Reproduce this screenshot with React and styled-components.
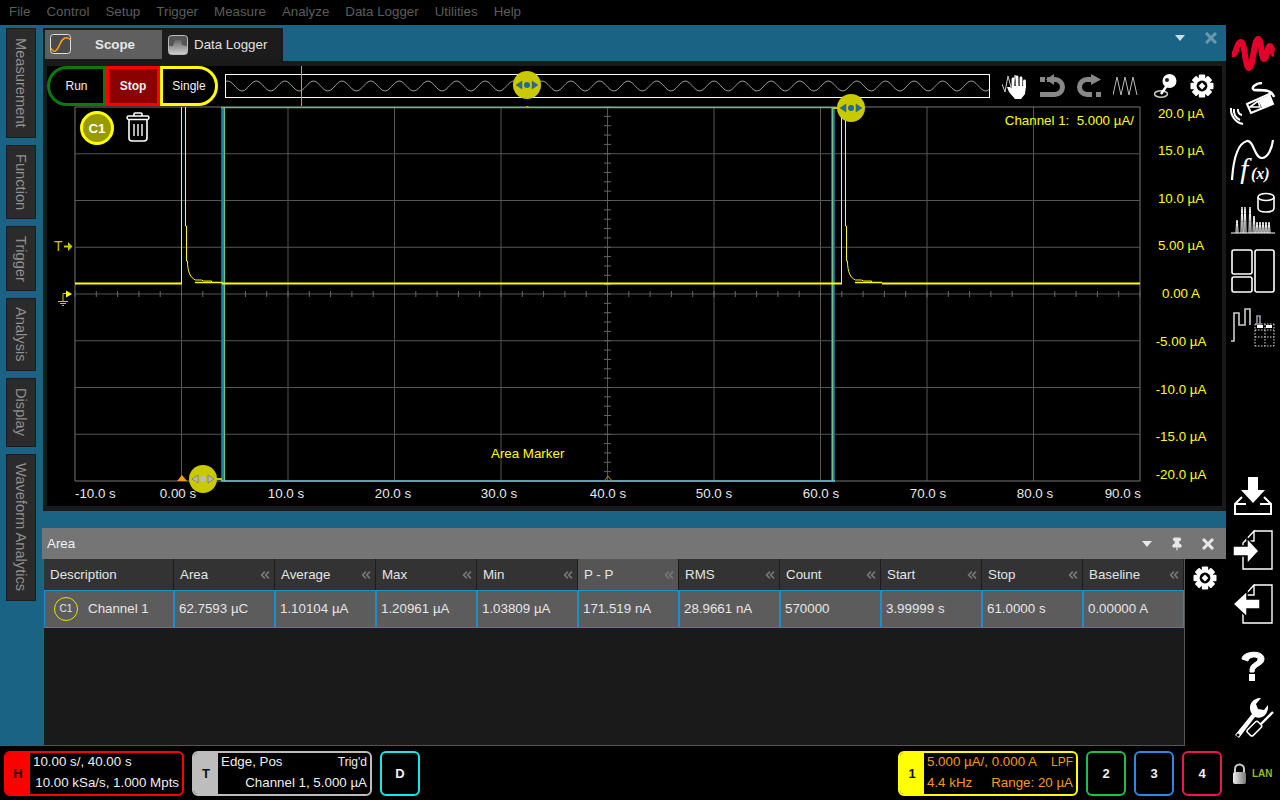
import React from "react";
import styled, { createGlobalStyle } from "styled-components";
import { ChevronsLeft, Pin } from "lucide-react";

const GlobalStyle = createGlobalStyle`
  html, body {
    margin: 0;
    padding: 0;
    background: #000;
  }
  body {
    font-family: "Liberation Sans", Arial, sans-serif;
  }
  * {
    box-sizing: border-box;
  }
`;

const Page = styled.div`
  width: 1280px;
  height: 800px;
  display: flex;
  flex-direction: column;
  overflow: hidden;
  background: #000;
`;

const MenuBar = styled.div`
  height: 25px;
  display: flex;
  align-items: center;
  gap: 16px;
  padding: 0 0 2px 9px;
  font-size: 13.33px;
  color: #5c5c5c;
`;

const Middle = styled.div`
  height: 721px;
  display: flex;
`;

const Work = styled.div`
  width: 1226px;
  display: flex;
  background: #1a6384;
`;

const SideTabs = styled.div`
  width: 43px;
  display: flex;
  flex-direction: column;
  gap: 7px;
  padding: 3px 0 0 6px;
`;

const SideTab = styled.div`
  width: 30px;
  height: ${(p) => p.$h}px;
  background: #2b2b2b;
  border: 1px solid #1c1c1c;
  color: #909090;
  font-size: 14.67px;
  writing-mode: vertical-rl;
  display: flex;
  justify-content: center;
  white-space: nowrap;
  line-height: 28px;
`;

const Panels = styled.div`
  width: 1183px;
  display: flex;
  flex-direction: column;
`;

const TabStrip = styled.div`
  height: 36px;
  padding-top: 3px;
  display: flex;
  align-items: flex-start;
  justify-content: space-between;
`;

const TabGroup = styled.div`
  width: 240px;
  height: 33px;
  padding: 2px;
  display: flex;
  background: #1a1a1a;
`;

const ViewTab = styled.div`
  flex: ${(p) => (p.$active ? "0 0 117px" : "1")};
  display: flex;
  align-items: center;
  gap: ${(p) => (p.$active ? "23px" : "6px")};
  padding-left: ${(p) => (p.$active ? "5px" : "6px")};
  background: ${(p) => (p.$active ? "#5f5f5f" : "#1c1c1c")};
  color: ${(p) => (p.$active ? "#e6e6e6" : "#e0e0e0")};
  font-size: 13.33px;
  font-weight: ${(p) => (p.$active ? 700 : 400)};
`;

const WindowButtons = styled.div`
  display: flex;
  align-items: center;
  gap: 20px;
  padding: 4px 9px 0 0;
`;

const ScopePanel = styled.div`
  height: 450px;
  padding: 5px 4px;
  background: #1a1a1a;
`;

const ScopeInner = styled.div`
  position: relative;
  height: 440px;
  background: #000;
`;

const Toolbar = styled.div`
  height: 40px;
  display: flex;
  align-items: center;
`;

const RunButton = styled.div`
  flex: 0 0 ${(p) => p.$w}px;
  height: 40px;
  display: flex;
  align-items: center;
  justify-content: center;
  border: 3px solid ${(p) => p.$color};
  border-radius: ${(p) => p.$radius};
  background: ${(p) => p.$bg || "#000"};
  color: #f0f0f0;
  font-size: 12px;
  font-weight: ${(p) => (p.$bold ? 700 : 400)};
`;

const Overview = styled.div`
  flex: 0 0 765px;
  height: 24px;
  margin-left: 7px;
  border: 1px solid #fff;
  overflow: hidden;
`;

const ToolIcons = styled.div`
  display: flex;
  align-items: center;
  margin-left: 6.5px;
`;

const ToolSlot = styled.div`
  flex: 0 0 ${(p) => p.$w}px;
  display: flex;
  justify-content: center;
`;

const Playhead = styled.div`
  position: absolute;
  left: 254px;
  top: 0;
  width: 1px;
  height: 40px;
  background: #d9963a;
`;

const PlotSvg = styled.svg`
  display: block;
  width: 1175px;
  height: 400px;
  font-family: "Liberation Sans", Arial, sans-serif;
  font-size: 13.33px;
`;

const ChannelBadge = styled.div`
  position: absolute;
  left: 33px;
  top: 45px;
  width: 34px;
  height: 34px;
  border-radius: 50%;
  border: 3px solid #ffff00;
  background: #999900;
  color: #fff;
  font-size: 13.33px;
  font-weight: 700;
  display: flex;
  align-items: center;
  justify-content: center;
`;

const TrashSlot = styled.div`
  position: absolute;
  left: 79px;
  top: 46px;
`;

const HandleBody = styled.div`
  position: absolute;
  left: ${(p) => p.$x - 14}px;
  top: ${(p) => p.$y - 14}px;
  width: 28px;
  height: 28px;
  border-radius: 50%;
  background: #c9c900;
  display: flex;
  align-items: center;
  justify-content: center;
`;

const AreaPanel = styled.div`
  margin-top: 17px;
  height: 218px;
  display: flex;
  flex-direction: column;
  background: #000;
`;

const TitleBar = styled.div`
  height: 31px;
  margin-left: -1px;
  padding: 0 12px 0 5px;
  display: flex;
  align-items: center;
  justify-content: space-between;
  background: #757575;
  color: #f2f2f2;
  font-size: 13.33px;
`;

const TitleButtons = styled.div`
  display: flex;
  align-items: center;
  gap: 18px;
`;

const AreaBody = styled.div`
  flex: 1;
  display: flex;
`;

const TableWrap = styled.div`
  width: 1142px;
  display: flex;
  flex-direction: column;
  background: #1a1a1a;
  border-right: 1px solid #555;
  border-bottom: 1px solid #555;
  border-left: 1px solid #555;
`;

const TableRow = styled.div`
  display: grid;
  grid-template-columns: 130px repeat(10, 1fr);
`;

const HeadCell = styled.div`
  height: 31px;
  display: flex;
  align-items: center;
  justify-content: space-between;
  padding: 0 2px 0 6px;
  background: ${(p) => (p.$active ? "#555" : "#333")};
  border-right: 1px solid #1c1c1c;
  color: #e4e4e4;
  font-size: 13.33px;
`;

const DataCell = styled.div`
  height: 38px;
  display: flex;
  align-items: center;
  gap: 10px;
  padding: 0 0 1px ${(p) => (p.$first ? 9 : 4)}px;
  background: #5c5c5c;
  border: 1px solid #1b8fc9;
  color: #e6e6e6;
  font-size: 13.33px;
`;

const MiniBadge = styled.div`
  width: 24px;
  height: 24px;
  border-radius: 50%;
  border: 1.5px solid #e6e600;
  color: #e8e8e8;
  font-size: 10px;
  display: flex;
  align-items: center;
  justify-content: center;
`;

const GearColumn = styled.div`
  flex: 1;
  display: flex;
  justify-content: center;
  padding: 7px 1px 0 0;
`;

const Sidebar = styled.div`
  flex: 1;
  display: flex;
  flex-direction: column;
  align-items: center;
`;

const SideIcon = styled.div`
  margin-top: ${(p) => p.$mt}px;
  line-height: 0;
`;

const StatusBar = styled.div`
  height: 54px;
  display: flex;
  align-items: flex-start;
  padding: 5px 0 0 4px;
`;

const InfoBox = styled.div`
  flex: 0 0 180px;
  height: 45px;
  margin-right: ${(p) => p.$mr || 0}px;
  display: flex;
  border: 2px solid ${(p) => p.$color};
  border-radius: 6px;
  overflow: hidden;
  background: #000;
`;

const InfoKey = styled.div`
  flex: 0 0 24px;
  display: flex;
  align-items: center;
  justify-content: center;
  background: ${(p) => p.$color};
  color: #111;
  font-size: 13px;
  font-weight: 700;
`;

const InfoText = styled.div`
  flex: 1;
  display: flex;
  flex-direction: column;
  justify-content: space-between;
  padding: 0 3px 2px 3px;
  color: ${(p) => p.$color || "#eee"};
  font-size: 13.33px;
  line-height: 18px;
`;

const InfoLine = styled.div`
  display: flex;
  justify-content: ${(p) => p.$justify || "space-between"};
  white-space: nowrap;
`;

const SmallNote = styled.span`
  font-size: 12px;
`;

const ChannelButton = styled.div`
  flex: 0 0 40px;
  height: 45px;
  margin-right: ${(p) => p.$mr || 0}px;
  display: flex;
  align-items: center;
  justify-content: center;
  border: 2px solid ${(p) => p.$color};
  border-radius: 6px;
  color: #f2f2f2;
  font-size: 13px;
  font-weight: 700;
`;

const Spacer = styled.div`
  flex: 1;
`;

const LockBox = styled.div`
  flex: 0 0 58px;
  height: 45px;
  display: flex;
  align-items: center;
  padding-left: 10px;
  gap: 5px;
  color: #8dbb2c;
  font-size: 10px;
  font-weight: 700;
`;

const menuItems = ["File", "Control", "Setup", "Trigger", "Measure", "Analyze", "Data Logger", "Utilities", "Help"];

const sideTabs = [
  ["Measurement", 110],
  ["Function", 74],
  ["Trigger", 65],
  ["Analysis", 73],
  ["Display", 69],
  ["Waveform Analytics", 147],
];

const columns = ["Description", "Area", "Average", "Max", "Min", "P - P", "RMS", "Count", "Start", "Stop", "Baseline"];
const values = ["62.7593 µC", "1.10104 µA", "1.20961 µA", "1.03809 µA", "171.519 nA", "28.9661 nA", "570000", "3.99999 s", "61.0000 s", "0.00000 A"];

const xLabels = [
  ["-10.0 s", 75, "start"],
  ["0.00 s", 178, "middle"],
  ["10.0 s", 286, "middle"],
  ["20.0 s", 393, "middle"],
  ["30.0 s", 499, "middle"],
  ["40.0 s", 608, "middle"],
  ["50.0 s", 714, "middle"],
  ["60.0 s", 821, "middle"],
  ["70.0 s", 928, "middle"],
  ["80.0 s", 1035, "middle"],
  ["90.0 s", 1141, "end"],
];

const yLabels = [
  ["20.0 µA", 118],
  ["15.0 µA", 155],
  ["10.0 µA", 203],
  ["5.00 µA", 250],
  ["0.00 A", 298],
  ["-5.00 µA", 346],
  ["-10.0 µA", 394],
  ["-15.0 µA", 441],
  ["-20.0 µA", 479],
];

// one spike of the trace, x is where the signal jumps up
const spikePath = (x) =>
  `M${x} 283 V107 M${x + 4} 107 V226 H${x + 5} V261 H${x + 6} C${x + 6} 272 ${x + 9} 278 ${x + 14} 280 H${x + 20} L${x + 22} 281 H${x + 30} V282.5 H${x + 40}`;

const sineWave = () => {
  const pts = [];
  for (let x = 0; x <= 765; x += 2) {
    pts.push(`${x},${11 + 5 * Math.sin((x / 28.6) * 2 * Math.PI - 1.945)}`);
  }
  return pts.join(" ");
};

const GearIcon = ({ size = 24 }) => (
  <svg width={size} height={size} viewBox="0 0 24 24">
    {[0, 45, 90, 135].map((r) => (
      <rect key={r} x="8.8" y="0.5" width="6.4" height="23" rx="1" fill="#fff" transform={`rotate(${r} 12 12)`} />
    ))}
    <circle cx="12" cy="12" r="8.5" fill="#fff" />
    <circle cx="12" cy="12" r="5.4" fill="#000" />
    <path d="M12 8.6 L15.4 12 L12 15.4 L8.6 12 Z" fill="#fff" />
  </svg>
);

const HandleArrows = ({ color }) => (
  <svg width="24" height="12" viewBox="0 0 24 12">
    <path d="M1 6 L7 2 V10 Z" fill={color} stroke="#556" strokeWidth="0.5" />
    <circle cx="12" cy="6" r="3" fill={color} />
    <path d="M23 6 L17 2 V10 Z" fill={color} stroke="#556" strokeWidth="0.5" />
  </svg>
);

const ScopeTabIcon = () => (
  <svg width="22" height="21" viewBox="0 0 22 21">
    <rect x="0.5" y="0.5" width="20" height="19" rx="3" fill="#4a4a4a" stroke="#ddd" />
    <path d="M1 14 C4 20 7 17 10 10 C12 5 16 1 21 6" fill="none" stroke="#f2a31b" strokeWidth="1.6" />
  </svg>
);

const LoggerTabIcon = () => (
  <svg width="20" height="20" viewBox="0 0 20 20">
    <defs>
      <linearGradient id="loggerFill" x1="0" x2="0" y1="0" y2="1">
        <stop offset="0" stopColor="#666" />
        <stop offset="1" stopColor="#ccc" />
      </linearGradient>
    </defs>
    <rect x="0.5" y="0.5" width="19" height="19" rx="3" fill="#555" stroke="#bbb" />
    <path d="M1 19 V11 L5 11 L7 5 H13 L14 10 L19 11 V19 Z" fill="url(#loggerFill)" />
  </svg>
);

const HandIcon = () => (
  <svg width="26" height="26" viewBox="0 0 26 26">
    <path d="M0 11 L3 19 L6 3 L10 18 L13 2 L17 16" fill="none" stroke="#ccc" strokeWidth="1" />
    <path d="M11 13 V6 M15 12 V4 M19 12 V5 M22.5 14 V8" stroke="#fff" strokeWidth="2.8" strokeLinecap="round" />
    <path d="M9.5 13 H24 L23 21 L19 26 H13 L7 19 L5 14 L8 14 L10 16 Z" fill="#fff" />
  </svg>
);

const UndoIcon = () => (
  <svg width="25" height="24" viewBox="0 0 25 24">
    <rect x="0" y="3" width="5" height="5" fill="#888" />
    <path d="M7 5.5 H15 A7.5 7.5 0 0 1 15 20.5 H0" fill="none" stroke="#888" strokeWidth="5" />
    <path d="M14 0 L6 5.5 L14 11 Z" fill="#888" />
  </svg>
);

const RedoIcon = () => (
  <svg width="25" height="24" viewBox="0 0 25 24">
    <rect x="19" y="18" width="5" height="5" fill="#888" />
    <path d="M18 5.5 H10 A7.5 7.5 0 0 0 10 20.5 H15" fill="none" stroke="#888" strokeWidth="5" />
    <path d="M14 0 L24 5.5 L14 11 Z" fill="#888" />
  </svg>
);

const ZigzagIcon = () => (
  <svg width="25" height="20" viewBox="0 0 25 20">
    <path d="M0 19 L4 1 L8 19 L12 1 L16 19 L20 1 L24 19" fill="none" stroke="#bbb" strokeWidth="1" />
  </svg>
);

const JoystickIcon = () => (
  <svg width="24" height="25" viewBox="0 0 24 25">
    <ellipse cx="7" cy="20" rx="6.5" ry="3.2" fill="none" stroke="#ccc" strokeWidth="1.5" />
    <path d="M7 20 L14 10" stroke="#fff" strokeWidth="2.5" />
    <circle cx="15.5" cy="7" r="7" fill="#fff" />
    <circle cx="13" cy="6" r="2" fill="#222" />
  </svg>
);

const TrashIcon = () => (
  <svg width="24" height="30" viewBox="0 0 24 30">
    <path d="M8 4 V2 Q8 1 9 1 H15 Q16 1 16 2 V4" fill="none" stroke="#fff" strokeWidth="1.6" />
    <rect x="1" y="4" width="22" height="3.4" rx="1.7" fill="none" stroke="#fff" strokeWidth="1.5" />
    <path d="M3 8 V26 Q3 29 6 29 H18 Q21 29 21 26 V8" fill="none" stroke="#fff" strokeWidth="1.6" />
    <path d="M8 12 V24 M12 12 V24 M16 12 V24" stroke="#ddd" strokeWidth="1.6" />
  </svg>
);

const LogoIcon = () => (
  <svg width="44" height="36" viewBox="0 0 44 36">
    <path
      d="M1 18 H3 C5 18 6 6 10 6 C14 6 14 32 18 32 C22 32 23 3 27 3 C31 3 30 23 33 23 C36 23 36 10 39 10 C41 10 41 18 43 18"
      fill="none"
      stroke="#e4002b"
      strokeWidth="6"
      strokeLinejoin="round"
    />
  </svg>
);

const ProbeIcon = () => (
  <svg width="54" height="48" viewBox="0 0 54 48">
    <path d="M44 13 C46 7 34 8 28 8 C24 6 30 1 36 1 M28 8 C34 9 46 6 48 15" fill="none" stroke="#fff" strokeWidth="2.4" />
    <path d="M21 22 L43 12 L47 22 L25 31 Z" fill="#000" stroke="#fff" strokeWidth="2" />
    <path d="M32 18 L43 13 L47 22 L36 26 Z" fill="#fff" />
    <path d="M24 25 L32 19 L34 25 Z" fill="none" stroke="#fff" strokeWidth="1.6" />
    <path d="M16 33 A5 5 0 0 1 12 27 M14 38 A10 10 0 0 1 8 27 M17 42 A15 15 0 0 1 5 26" fill="none" stroke="#fff" strokeWidth="2" />
  </svg>
);

const FxIcon = () => (
  <svg width="44" height="46" viewBox="0 0 44 46">
    <path d="M1 42 C2 26 5 6 16 3 C23 2 23 20 31 20 C37 20 41 10 42 2" fill="none" stroke="#fff" strokeWidth="2.2" />
    <text x="9" y="41" fontFamily="Liberation Serif, serif" fontSize="30" fontStyle="italic" fill="#fff">f</text>
    <text x="20" y="41" fontFamily="Liberation Serif, serif" fontSize="16" fontStyle="italic" fontWeight="700" fill="#fff">(x)</text>
  </svg>
);

const histogramBars = [
  [6, 28], [11, 15], [14, 15], [19, 15], [23, 24], [26, 30], [29, 30], [32, 30], [35, 30], [38, 30],
];

const HistogramIcon = () => (
  <svg width="44" height="42" viewBox="0 0 44 42">
    <ellipse cx="35" cy="5" rx="8" ry="3.5" fill="none" stroke="#fff" strokeWidth="1.6" />
    <path d="M27 5 V16 Q27 20 35 20 Q43 20 43 16 V5" fill="none" stroke="#fff" strokeWidth="1.6" />
    <path d="M0 41 H44" stroke="#fff" strokeWidth="1.2" />
    {histogramBars.map(([x, top]) => (
      <path key={x} d={`M${x - 1} 41 Q${x - 0.5} ${top} ${x} ${top} Q${x + 0.5} ${top} ${x + 1} 41`} fill="none" stroke="#fff" strokeWidth="1" />
    ))}
  </svg>
);

const LayoutIcon = () => (
  <svg width="44" height="44" viewBox="0 0 44 44">
    <rect x="1" y="1" width="20" height="24" rx="2" fill="none" stroke="#fff" strokeWidth="1.6" />
    <rect x="1" y="28" width="20" height="15" rx="2" fill="none" stroke="#fff" strokeWidth="1.6" />
    <rect x="24" y="1" width="19" height="42" rx="2" fill="none" stroke="#fff" strokeWidth="1.6" />
  </svg>
);

const BitsIcon = () => (
  <svg width="44" height="42" viewBox="0 0 44 42">
    <path d="M0 33 H3 V5 H8 V17 H14 V1 H19 V17" fill="none" stroke="#ccc" strokeWidth="1.6" />
    <path d="M26 17 V8 H29 V17" fill="none" stroke="#99a" strokeWidth="1.6" />
    <path d="M24 16 V38 M34 16 V38 M43 16 V38 M24 16 H43 M24 22 H43 M24 29 H43 M24 38 H43" fill="none" stroke="#ddd" strokeWidth="1" strokeDasharray="1.5 1.5" />
    <rect x="26" y="17" width="6" height="3" fill="#fff" />
    <rect x="35" y="17" width="6" height="3" fill="#fff" />
  </svg>
);

const DownloadIcon = () => (
  <svg width="38" height="38" viewBox="0 0 38 38">
    <path d="M14 0 H24 V13 H31 L19 26 L7 13 H14 Z" fill="#fff" />
    <path d="M8 20 L1 27 V37 H37 V27 L30 20" fill="none" stroke="#fff" strokeWidth="2" />
    <path d="M1 27 H12 M26 27 H37" stroke="#fff" strokeWidth="2" />
  </svg>
);

const ImportIcon = ({ out }) => (
  <svg width="40" height="40" viewBox="0 0 40 40">
    <path d="M21 1 H39 V39 H10 V13 L21 1 V11 H12" fill="none" stroke="#fff" strokeWidth="1.4" />
    {out ? (
      <path d="M27 16 H14 V8 L0 21 L14 34 V26 H27 Z" fill="#fff" stroke="#000" strokeWidth="1.5" transform="translate(0 -1)" />
    ) : (
      <path d="M0 16 H14 V8 L26 21 L14 34 V26 H0 Z" fill="#fff" stroke="#000" strokeWidth="1.5" />
    )}
  </svg>
);

const WrenchIcon = () => (
  <svg width="42" height="42" viewBox="0 0 42 42">
    <path d="M3 38 L20 17 C15 9 20 1 29 1 L24 7 L26 12 L32 13 L36 8 C37 17 30 23 23 20 L7 41 Z" fill="#fff" />
    <circle cx="6" cy="38" r="1.5" fill="#000" />
    <path d="M28 28 L41 15" stroke="#fff" strokeWidth="2.4" />
    <rect x="15" y="28" width="15" height="8" rx="2" fill="#000" stroke="#fff" strokeWidth="1.5" transform="rotate(-45 22 32)" />
  </svg>
);

const LockIcon = () => (
  <svg width="15" height="22" viewBox="0 0 15 22">
    <defs>
      <linearGradient id="lockBody" x1="0" x2="1">
        <stop offset="0" stopColor="#eee" />
        <stop offset="1" stopColor="#777" />
      </linearGradient>
    </defs>
    <path d="M3 10 V6 A4.5 4.5 0 0 1 12 6 V10" fill="none" stroke="#ccc" strokeWidth="2" />
    <rect x="1" y="9" width="13" height="12" rx="2" fill="url(#lockBody)" />
  </svg>
);

const Plot = () => {
  const vGrid = [];
  for (let i = 0; i <= 10; i++) vGrid.push(75 + i * 106.5);
  const hGrid = [];
  for (let i = 0; i <= 8; i++) hGrid.push(107 + i * 46.75);
  const xTicks = [];
  for (let x = 75; x <= 1140; x += 21.3) xTicks.push(x);
  const yTicks = [];
  for (let y = 107; y <= 481; y += 9.35) yTicks.push(y);

  return (
    <PlotSvg viewBox="47 106 1175 400">
      {vGrid.map((x) => (
        <line key={x} x1={x} x2={x} y1="107" y2="481" stroke={x === 75 || x === 1140 ? "#777" : "#555"} />
      ))}
      {hGrid.map((y) => (
        <line key={y} x1="75" x2="1140" y1={y} y2={y} stroke={y === 107 || y === 481 ? "#777" : "#555"} />
      ))}
      {xTicks.map((x) => (
        <line key={x} x1={x} x2={x} y1="291" y2="297" stroke="#666" />
      ))}
      {yTicks.map((y) => (
        <line key={y} x1="604" x2="611" y1={y} y2={y} stroke="#666" />
      ))}

      {/* area marker */}
      <path d="M223 481 V107 M833 481 V107" fill="none" stroke="#1e7f9c" strokeWidth="3.6" />
      <path d="M224.5 481 V107.5 M832.5 481 V107.5" fill="none" stroke="#6fc48e" strokeWidth="1.2" />
      <line x1="221" x2="835" y1="107.5" y2="107.5" stroke="#5fb98a" strokeWidth="1.4" />
      <line x1="221" x2="835" y1="481" y2="481" stroke="#6cc4d0" strokeWidth="1.4" />
      <line x1="527.5" x2="527.5" y1="99" y2="107" stroke="#c9c900" strokeWidth="2" />
      <line x1="210" x2="222" y1="479" y2="479" stroke="#c9c900" strokeWidth="2" />
      <line x1="833" x2="842" y1="108" y2="108" stroke="#c9c900" strokeWidth="2" />

      {/* trace */}
      <path d="M75 283.5 H182 M222 283.5 H842 M882 283.5 H1140" stroke="#ffff00" strokeWidth="2" fill="none" />
      <path d={spikePath(181.5)} stroke="#ffff00" strokeWidth="1" fill="none" />
      <path d={spikePath(841.5)} stroke="#ffff00" strokeWidth="1" fill="none" />
      <path d="M195 282.5 H222 M855 282.5 H882" stroke="#ffff00" strokeWidth="1.6" fill="none" />

      {/* trigger and ground references */}
      <text x="54" y="251" fill="#c9c900" fontSize="14">T</text>
      <path d="M64 246.5 H68" stroke="#c9c900" strokeWidth="2" />
      <path d="M68 242 L72.5 246.5 L68 251 Z" fill="#c9c900" />
      <path d="M66 290.5 L72 294 L66 297.5 Z" fill="#ffff00" />
      <path d="M63 301 V293.5 H66 M58 301.5 H68 M60 303.5 H66 M62 305.5 H64" fill="none" stroke="#c9c900" />

      <path d="M177 481 L182 475 L187 481 Z" fill="#f09a1a" />
      <path d="M604 481 L608 476 L612 481" fill="none" stroke="#c0801a" />

      <text x="491" y="458" fill="#ffff00">Area Marker</text>
      <text x="1134" y="125" fill="#ffff00" textAnchor="end" xmlSpace="preserve">Channel 1:  5.000 µA/</text>

      {xLabels.map(([t, x, anchor]) => (
        <text key={t} x={x} y="498" fill="#e8e8e8" textAnchor={anchor}>{t}</text>
      ))}
      {yLabels.map(([t, y]) => (
        <text key={t} x="1181" y={y} fill="#ffff00" textAnchor="middle">{t}</text>
      ))}
    </PlotSvg>
  );
};

const App = () => (
  <Page>
    <GlobalStyle />
    <MenuBar>
      {menuItems.map((m) => (
        <span key={m}>{m}</span>
      ))}
    </MenuBar>
    <Middle>
      <Work>
        <SideTabs>
          {sideTabs.map(([label, h]) => (
            <SideTab key={label} $h={h}>{label}</SideTab>
          ))}
        </SideTabs>
        <Panels>
          <TabStrip>
            <TabGroup>
              <ViewTab $active>
                <ScopeTabIcon />
                Scope
              </ViewTab>
              <ViewTab>
                <LoggerTabIcon />
                Data Logger
              </ViewTab>
            </TabGroup>
            <WindowButtons>
              <svg width="10" height="6" viewBox="0 0 10 6"><path d="M0 0 H10 L5 6 Z" fill="#cfdde5" /></svg>
              <svg width="12" height="12" viewBox="0 0 12 12"><path d="M1 1 L11 11 M11 1 L1 11" stroke="#6f97ad" strokeWidth="3" /></svg>
            </WindowButtons>
          </TabStrip>
          <ScopePanel>
            <ScopeInner>
              <Toolbar>
                <RunButton $w={59} $color="#0a7a0a" $radius="20px 0 0 20px">Run</RunButton>
                <RunButton $w={54} $color="#f00" $bg="#8b0000" $radius="0" $bold>Stop</RunButton>
                <RunButton $w={58} $color="#ffff00" $radius="0 20px 20px 0">Single</RunButton>
                <Overview>
                  <svg width="765" height="24" viewBox="0 0 765 24">
                    <polyline points={sineWave()} fill="none" stroke="#999" strokeWidth="1" />
                  </svg>
                </Overview>
                <ToolIcons>
                  <ToolSlot $w={37}><HandIcon /></ToolSlot>
                  <ToolSlot $w={37}><UndoIcon /></ToolSlot>
                  <ToolSlot $w={37}><RedoIcon /></ToolSlot>
                  <ToolSlot $w={35}><ZigzagIcon /></ToolSlot>
                  <ToolSlot $w={47}><JoystickIcon /></ToolSlot>
                  <ToolSlot $w={24}><GearIcon /></ToolSlot>
                </ToolIcons>
              </Toolbar>
              <Plot />
              <Playhead />
              <ChannelBadge>C1</ChannelBadge>
              <TrashSlot><TrashIcon /></TrashSlot>
              <HandleBody $x={480} $y={19}><HandleArrows color="#1c6f94" /></HandleBody>
              <HandleBody $x={804} $y={42}><HandleArrows color="#1c6f94" /></HandleBody>
              <HandleBody $x={156} $y={413}><HandleArrows color="#bbb" /></HandleBody>
            </ScopeInner>
          </ScopePanel>
          <AreaPanel>
            <TitleBar>
              Area
              <TitleButtons>
                <svg width="10" height="6" viewBox="0 0 10 6"><path d="M0 0 H10 L5 6 Z" fill="#e8e8e8" /></svg>
                <Pin size={14} color="#e8e8e8" fill="#e8e8e8" />
                <svg width="12" height="12" viewBox="0 0 12 12"><path d="M1 1 L11 11 M11 1 L1 11" stroke="#e8e8e8" strokeWidth="3" /></svg>
              </TitleButtons>
            </TitleBar>
            <AreaBody>
              <TableWrap>
                <TableRow>
                  {columns.map((c, i) => (
                    <HeadCell key={c} $active={c === "P - P"}>
                      {c}
                      {i > 0 && <ChevronsLeft size={14} color="#777" strokeWidth={3} />}
                    </HeadCell>
                  ))}
                </TableRow>
                <TableRow>
                  <DataCell $first>
                    <MiniBadge>C1</MiniBadge>
                    Channel 1
                  </DataCell>
                  {values.map((v) => (
                    <DataCell key={v}>{v}</DataCell>
                  ))}
                </TableRow>
              </TableWrap>
              <GearColumn><GearIcon size={24} /></GearColumn>
            </AreaBody>
          </AreaPanel>
        </Panels>
      </Work>
      <Sidebar>
        <SideIcon $mt={11}><LogoIcon /></SideIcon>
        <SideIcon $mt={10}><ProbeIcon /></SideIcon>
        <SideIcon $mt={8}><FxIcon /></SideIcon>
        <SideIcon $mt={8}><HistogramIcon /></SideIcon>
        <SideIcon $mt={15}><LayoutIcon /></SideIcon>
        <SideIcon $mt={15}><BitsIcon /></SideIcon>
        <SideIcon $mt={127}><DownloadIcon /></SideIcon>
        <SideIcon $mt={15}><ImportIcon /></SideIcon>
        <SideIcon $mt={14}><ImportIcon out /></SideIcon>
        <SideIcon $mt={24}>
          <svg width="30" height="34" viewBox="0 0 30 34">
            <path d="M4 11 C4 3 26 1 26 11 C26 18 16 17 16 24 H12 C11 15 20 15 20 11 C20 8 11 8 10 13 Z" fill="#fff" stroke="#fff" strokeWidth="1" />
            <rect x="11" y="26" width="6" height="7" fill="#fff" />
          </svg>
        </SideIcon>
        <SideIcon $mt={15}><WrenchIcon /></SideIcon>
      </Sidebar>
    </Middle>
    <StatusBar>
      <InfoBox $color="#f00" $mr={8}>
        <InfoKey $color="#f00">H</InfoKey>
        <InfoText>
          <InfoLine>10.00 s/, 40.00 s</InfoLine>
          <InfoLine $justify="flex-end">10.00 kSa/s, 1.000 Mpts</InfoLine>
        </InfoText>
      </InfoBox>
      <InfoBox $color="#bdbdbd" $mr={8}>
        <InfoKey $color="#bdbdbd">T</InfoKey>
        <InfoText>
          <InfoLine>Edge, Pos <SmallNote>Trig'd</SmallNote></InfoLine>
          <InfoLine $justify="flex-end">Channel 1, 5.000 µA</InfoLine>
        </InfoText>
      </InfoBox>
      <ChannelButton $color="#19e6e6">D</ChannelButton>
      <Spacer />
      <InfoBox $color="#ffff00" $mr={8}>
        <InfoKey $color="#ffff00">1</InfoKey>
        <InfoText $color="#f39c12">
          <InfoLine>5.000 µA/, 0.000 A <SmallNote>LPF</SmallNote></InfoLine>
          <InfoLine>4.4 kHz <span>Range: 20 µA</span></InfoLine>
        </InfoText>
      </InfoBox>
      <ChannelButton $color="#17c24a" $mr={8}>2</ChannelButton>
      <ChannelButton $color="#2e86e6" $mr={8}>3</ChannelButton>
      <ChannelButton $color="#f01450">4</ChannelButton>
      <LockBox>
        <LockIcon />
        LAN
      </LockBox>
    </StatusBar>
  </Page>
);

export default App;
